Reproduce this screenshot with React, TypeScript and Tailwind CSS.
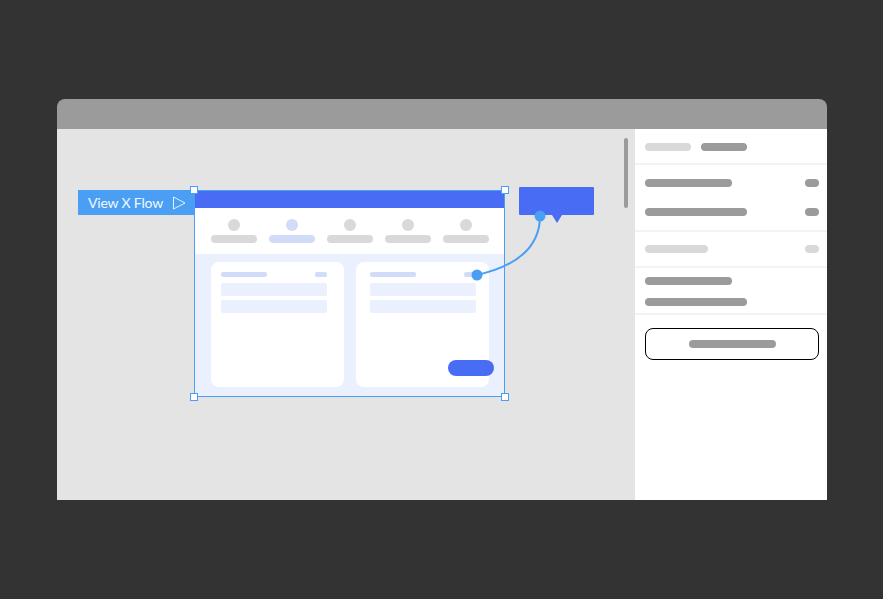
import React from 'react';

function Bar({ className = '' }: { className?: string }) {
  return <div className={`h-2 rounded-full ${className}`} />;
}

function SideRow({ width, tone = 'bg-[#9b9b9b]' }: { width: string; tone?: string }) {
  return (
    <div className="flex items-center justify-between pl-[10px] pr-2">
      <Bar className={`${width} ${tone}`} />
      <Bar className={`w-[14px] ${tone}`} />
    </div>
  );
}

function Handle({ className = '' }: { className?: string }) {
  return <div className={`absolute h-2 w-2 border border-[#4a9ff5] bg-white ${className}`} />;
}

function NavItem({ active = false }: { active?: boolean }) {
  const tone = active ? 'bg-[#d1dcf9]' : 'bg-[#d9d9d9]';
  return (
    <div className="flex w-[46px] shrink-0 flex-col items-center gap-1">
      <div className={`h-3 w-3 rounded-full ${tone}`} />
      <div className={`h-2 w-full rounded-full ${tone}`} />
    </div>
  );
}

function Card({ className = '', children }: { className?: string; children?: React.ReactNode }) {
  return (
    <div className={`relative h-[125px] w-[133px] shrink-0 rounded-lg bg-white pt-[10px] ${className}`}>
      <div className="flex justify-between">
        <div className="h-[5px] w-[46px] rounded-xs bg-[#d1dcf9]" />
        <div className="h-[5px] w-3 rounded-xs bg-[#d1dcf9]" />
      </div>
      <div className="mt-[6px] h-[13px] rounded-xs bg-[#eaf0fe]" />
      <div className="mt-1 h-[13px] rounded-xs bg-[#eaf0fe]" />
      {children}
    </div>
  );
}

export default function App() {
  return (
    <div className="h-[599px] w-[883px] bg-[#333333] pl-[57px] pt-[99px]">
      <div className="w-[770px]">
        <div className="h-[30px] rounded-t-lg bg-[#9b9b9b]" />
        <div className="flex h-[371px]">
          {/* canvas */}
          <div className="relative w-[578px] bg-[#e4e4e4]">
            <div className="absolute left-[567px] top-[9px] h-[70px] w-1 rounded-full bg-[#9b9b9b]" />

            <div className="absolute left-[21px] top-[61px] flex h-[25px] w-[117px] items-center bg-[#4a9ff5] pl-[10px] font-['Lato',sans-serif] text-[14px] tracking-[-0.18px] text-[#f2f8fe]">
              View X Flow
              <svg className="absolute left-[95px] top-[6px]" width="13" height="14" viewBox="0 0 13 14" fill="none">
                <path d="M0.5 1 L12 7 L0.5 13 Z" stroke="#e3f0fd" strokeWidth="1" />
              </svg>
            </div>

            {/* frame */}
            <div className="absolute left-[137px] top-[61px] h-[207px] w-[311px] border border-[#4a9ff5] bg-white">
              <div className="h-[17px] bg-[#486cf4]" />
              <div className="flex h-[46px] gap-3 pl-4 pt-[11px]">
                <NavItem />
                <NavItem active />
                <NavItem />
                <NavItem />
                <NavItem />
              </div>
              <div className="flex h-[142px] gap-3 bg-[#eaf0fe] pl-4 pt-2">
                <Card className="pl-[10px] pr-[17px]" />
                <Card className="pl-[14px] pr-[13px]">
                  <div className="absolute left-[92px] top-[98px] h-4 w-[46px] rounded-full bg-[#486cf4]" />
                </Card>
              </div>
            </div>
            <Handle className="left-[133px] top-[57px]" />
            <Handle className="left-[444px] top-[57px]" />
            <Handle className="left-[133px] top-[264px]" />
            <Handle className="left-[444px] top-[264px]" />

            {/* tooltip */}
            <div className="absolute left-[462px] top-[58px] h-7 w-[75px] rounded-[1px] bg-[#486cf4]" />
            <svg className="absolute left-[495px] top-[86px]" width="10" height="8" viewBox="0 0 10 8">
              <path d="M0 0 H10 L5 8 Z" fill="#486cf4" />
            </svg>

            {/* connector */}
            <svg className="absolute left-[410px] top-[80px]" width="85" height="72" viewBox="0 0 85 72" fill="none">
              <path d="M73 7 C73 36 54 56 10 66" stroke="#4a9ff5" strokeWidth="2" />
              <circle cx="73" cy="7" r="5.5" fill="#4a9ff5" />
              <circle cx="10" cy="66" r="5.5" fill="#4a9ff5" />
            </svg>
          </div>

          {/* right panel */}
          <div className="w-[192px] bg-white">
            <div className="flex h-9 items-start gap-[10px] border-b-2 border-[#f3f3f3] pl-[10px] pt-[14px]">
              <Bar className="w-[46px] bg-[#d9d9d9]" />
              <Bar className="w-[46px] bg-[#9b9b9b]" />
            </div>
            <div className="flex flex-col gap-[21px] border-b-2 border-[#f3f3f3] pb-[14px] pt-[14px]">
              <SideRow width="w-[87px]" />
              <SideRow width="w-[102px]" />
            </div>
            <div className="border-b-2 border-[#f3f3f3] py-[13px]">
              <SideRow width="w-[63px]" tone="bg-[#d9d9d9]" />
            </div>
            <div className="flex flex-col gap-[13px] border-b-2 border-[#f3f3f3] pb-[7px] pl-[10px] pt-[9px]">
              <Bar className="w-[87px] bg-[#9b9b9b]" />
              <Bar className="w-[102px] bg-[#9b9b9b]" />
            </div>
            <div className="ml-[10px] mt-[13px] flex h-8 w-[174px] items-center justify-center rounded-lg border border-black">
              <Bar className="w-[87px] bg-[#9b9b9b]" />
            </div>
          </div>
        </div>
      </div>
    </div>
  );
}
